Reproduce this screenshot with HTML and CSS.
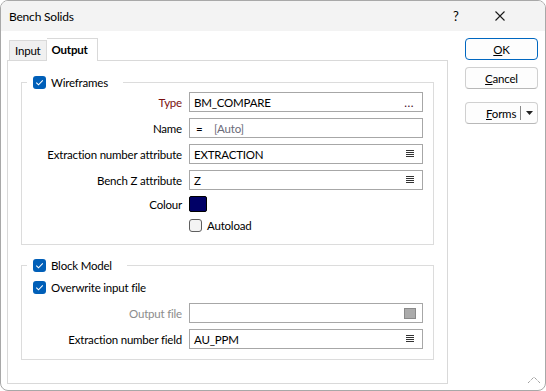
FILE: index.html
```html
<!DOCTYPE html>
<html lang="en">
<head>
<title>Bench Solids</title>
<link rel="stylesheet" href="styles.css">
</head>
<body>

<div class="window">
  <div class="titlebar">
    <span class="title">Bench Solids</span>
    <span class="help">?</span>
    <span class="close">
      <svg width="10" height="10" viewBox="0 0 10 10"><path d="M0.5 0.5 L9.5 9.5 M9.5 0.5 L0.5 9.5" stroke="#1a1a1a" stroke-width="1.1"/></svg>
    </span>
  </div>

  <div class="content">
    <div class="tabs-area">
      <div class="tab-strip">
        <div class="tab">Input</div>
        <div class="tab active">Output</div>
      </div>

      <div class="panel">
        <fieldset class="group wireframes">
          <legend><span class="check on"><svg width="13" height="13" viewBox="0 0 13 13"><path d="M3.3 6.6 L5.5 8.8 L9.8 4.4" fill="none" stroke="#fff" stroke-width="1.1"/></svg></span>Wireframes</legend>
          <div class="form-grid wire-grid">
            <span class="field-label type-label">Type</span>
            <div class="field"><span class="value">BM_COMPARE</span><span class="dots">...</span></div>

            <span class="field-label">Name</span>
            <div class="field"><span class="eq">=</span><span class="auto">[Auto]</span></div>

            <span class="field-label">Extraction number attribute</span>
            <div class="field"><span class="value">EXTRACTION</span><span class="list-icon"><svg width="8" height="8" viewBox="0 0 8 8"><path d="M0 0.5 H8 M0 2.5 H8 M0 4.5 H8 M0 6.5 H8" stroke="#333" stroke-width="1"/></svg></span></div>

            <span class="field-label">Bench Z attribute</span>
            <div class="field"><span class="value">Z</span><span class="list-icon"><svg width="8" height="8" viewBox="0 0 8 8"><path d="M0 0.5 H8 M0 2.5 H8 M0 4.5 H8 M0 6.5 H8" stroke="#333" stroke-width="1"/></svg></span></div>

            <span class="field-label">Colour</span>
            <div><span class="swatch"></span></div>

            <span></span>
            <div class="check-row"><span class="check"></span>Autoload</div>
          </div>
        </fieldset>

        <fieldset class="group block-model">
          <legend><span class="check on"><svg width="13" height="13" viewBox="0 0 13 13"><path d="M3.3 6.6 L5.5 8.8 L9.8 4.4" fill="none" stroke="#fff" stroke-width="1.1"/></svg></span>Block Model</legend>
          <div class="check-row overwrite"><span class="check on"><svg width="13" height="13" viewBox="0 0 13 13"><path d="M3.3 6.6 L5.5 8.8 L9.8 4.4" fill="none" stroke="#fff" stroke-width="1.1"/></svg></span>Overwrite input file</div>
          <div class="form-grid">
            <span class="field-label muted">Output file</span>
            <div class="field"><span class="value"></span><span class="file-box"></span></div>

            <span class="field-label">Extraction number field</span>
            <div class="field"><span class="value">AU_PPM</span><span class="list-icon"><svg width="8" height="8" viewBox="0 0 8 8"><path d="M0 0.5 H8 M0 2.5 H8 M0 4.5 H8 M0 6.5 H8" stroke="#333" stroke-width="1"/></svg></span></div>
          </div>
        </fieldset>
      </div>
    </div>

    <div class="buttons">
      <button type="button" class="btn default"><u>O</u>K</button>
      <button type="button" class="btn"><u>C</u>ancel</button>
      <button type="button" class="btn forms"><span class="forms-text"><u>F</u>orms</span><span class="split"></span><span class="arrow"><svg width="7" height="4" viewBox="0 0 7 4"><path d="M0 0 H7 L3.5 4 Z" fill="#222"/></svg></span></button>
    </div>
  </div>

  <svg class="grip" width="14" height="8" viewBox="0 0 14 8"><path d="M1 7 L7 1 L13 7" fill="none" stroke="#777" stroke-width="1" stroke-dasharray="1 1"/></svg>
</div>

</body>
</html>
```

FILE: styles.css
```css
* {
  box-sizing: border-box;
}

body {
  margin: 0;
  font-family: Lato, "Noto Sans", sans-serif;
  font-size: 11.5px;
  letter-spacing: -0.2px;
  color: #000;
  background-color: #fff;
}

.window {
  position: relative;
  width: 546px;
  height: 391px;
  border: 1px solid #a8a8a8;
  border-radius: 8px;
  background-color: #fff;
  overflow: hidden;
}

.titlebar {
  display: flex;
  align-items: center;
  height: 30px;
  padding-left: 8px;
  background-color: #f3f3f3;
  font-size: 12px;
}

.title {
  flex: 1;
}

.help {
  width: 42px;
  font-size: 13px;
}

.close {
  display: flex;
  width: 50px;
}

.content {
  display: flex;
  padding: 7px 0 0 6px;
}

.tabs-area {
  width: 441px;
}

.tab-strip {
  display: flex;
  align-items: flex-end;
  height: 22px;
  padding-left: 2px;
}

.tab {
  height: 20px;
  padding: 0 5px;
  line-height: 19px;
  border: 1px solid #d9d9d9;
  border-bottom: none;
  background-color: #f0f0f0;
}

.tab.active {
  height: 23px;
  margin-bottom: -1px;
  padding: 0 9px 0 5px;
  line-height: 21px;
  font-weight: bold;
  background-color: #fff;
  border-left: none;
  position: relative;
}

.panel {
  height: 324px;
  padding: 0 13px;
  border: 1px solid #d9d9d9;
  background-color: #fff;
}

.group {
  margin: 13px 0 0 0;
  padding: 2px 10px 12px 0;
  border: 1px solid #dcdcdc;
  min-width: 0;
}

.block-model {
  margin-top: 12px;
  padding-top: 7px;
  padding-bottom: 10px;
}

.group legend {
  display: flex;
  align-items: center;
  height: 16px;
  margin-left: 5px;
  padding: 0 15px 0 6px;
}

.check {
  display: inline-block;
  width: 13px;
  height: 13px;
  margin-right: 5px;
  border: 1px solid #5f5f5f;
  border-radius: 3px;
  background-color: #f3f3f3;
}

.check.on {
  border: none;
  background-color: #005fb8;
}

.check svg {
  display: block;
}

.form-grid {
  display: grid;
  grid-template-columns: 1fr 234px;
  grid-auto-rows: 20px;
  column-gap: 7px;
  row-gap: 6px;
}

.wire-grid {
  grid-template-rows: 20px 20px 20px 20px 16px 14px;
}

.field-label {
  display: flex;
  align-items: center;
  justify-content: flex-end;
  white-space: nowrap;
}

.type-label {
  color: #7a0f0f;
}

.muted {
  color: #8c8c8c;
}

.field {
  display: flex;
  align-items: center;
  padding: 0 4px;
  border: 1px solid #a7a7a7;
  background-color: #fff;
}

.value {
  flex: 1;
}

.dots {
  padding-right: 4px;
  color: #3c0a22;
  letter-spacing: 0.5px;
}

.eq {
  width: 20px;
  padding-left: 2px;
}

.auto {
  color: #6a6a78;
}

.list-icon {
  display: flex;
  padding-right: 4px;
}

.file-box {
  width: 12px;
  height: 11px;
  margin-right: 2px;
  border: 1px solid #8a8a8a;
  background-color: #ababab;
}

.swatch {
  display: block;
  width: 18px;
  height: 16px;
  border: 1px solid #000;
  border-radius: 2px;
  background-color: #000066;
}

.check-row {
  display: flex;
  align-items: center;
  height: 14px;
}

.overwrite {
  margin: 0 0 9px 11px;
}

.buttons {
  display: flex;
  flex-direction: column;
  margin-left: 17px;
  width: 73px;
}

.btn {
  height: 22px;
  margin-bottom: 7px;
  padding: 0;
  font-family: inherit;
  font-size: 11.5px;
  letter-spacing: inherit;
  color: #000;
  border: 1px solid #d0d0d0;
  border-bottom-color: #b8b8b8;
  border-radius: 4px;
  background-color: #fdfdfd;
}

.btn.default {
  border: 1px solid #0067c0;
}

.btn.forms {
  display: flex;
  align-items: center;
  margin-top: 6px;
  padding: 0 0 0 20px;
}

.forms-text {
  width: 34px;
  text-align: left;
}

.split {
  width: 1px;
  height: 14px;
  background-color: #888;
}

.arrow {
  display: flex;
  justify-content: center;
  flex: 1;
}

.grip {
  position: absolute;
  right: 4px;
  bottom: 6px;
}
```
